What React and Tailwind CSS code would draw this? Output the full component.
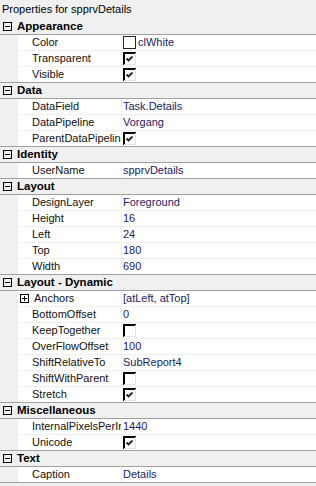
import React from "react";

const font = { fontFamily: '"Liberation Sans", Arial, sans-serif' };

function MinusBox() {
  return (
    <svg width="9" height="9" viewBox="0 0 9 9" className="shrink-0">
      <rect x="0.5" y="0.5" width="8" height="8" fill="none" stroke="#000" />
      <line x1="2" y1="4.5" x2="7" y2="4.5" stroke="#000" />
    </svg>
  );
}

function PlusBox() {
  return (
    <svg width="9" height="9" viewBox="0 0 9 9" className="shrink-0">
      <rect x="0.5" y="0.5" width="8" height="8" fill="none" stroke="#000" />
      <line x1="2" y1="4.5" x2="7" y2="4.5" stroke="#000" />
      <line x1="4.5" y1="2" x2="4.5" y2="7" stroke="#000" />
    </svg>
  );
}

function Check({ checked }) {
  return (
    <svg width="13" height="13" viewBox="0 0 13 13" className="shrink-0">
      <rect x="0" y="0" width="13" height="13" fill="#fff" />
      <rect x="0" y="0" width="13" height="2" fill="#000" />
      <rect x="0" y="0" width="2" height="13" fill="#000" />
      <rect x="12" y="1" width="1" height="12" fill="#e3e3e3" />
      <rect x="1" y="12" width="12" height="1" fill="#e3e3e3" />
      {checked && (
        <path d="M3.5 6.5 L5.5 8.5 L9.5 4.5" fill="none" stroke="#222" strokeWidth="1.8" />
      )}
    </svg>
  );
}

function ColorSwatch() {
  return (
    <svg width="13" height="13" viewBox="0 0 13 13" className="shrink-0">
      <rect x="0.5" y="0.5" width="12" height="12" fill="#fff" stroke="#222" />
    </svg>
  );
}

const groups = [
  {
    name: "Appearance",
    rows: [
      { n: "Color", v: "clWhite", swatch: true },
      { n: "Transparent", check: true },
      { n: "Visible", check: true },
    ],
  },
  {
    name: "Data",
    rows: [
      { n: "DataField", v: "Task.Details" },
      { n: "DataPipeline", v: "Vorgang" },
      { n: "ParentDataPipeline", check: true },
    ],
  },
  { name: "Identity", rows: [{ n: "UserName", v: "spprvDetails" }] },
  {
    name: "Layout",
    rows: [
      { n: "DesignLayer", v: "Foreground" },
      { n: "Height", v: "16" },
      { n: "Left", v: "24" },
      { n: "Top", v: "180" },
      { n: "Width", v: "690" },
    ],
  },
  {
    name: "Layout - Dynamic",
    rows: [
      { n: "Anchors", v: "[atLeft, atTop]", plus: true },
      { n: "BottomOffset", v: "0" },
      { n: "KeepTogether", check: false },
      { n: "OverFlowOffset", v: "100" },
      { n: "ShiftRelativeTo", v: "SubReport4" },
      { n: "ShiftWithParent", check: false },
      { n: "Stretch", check: true },
    ],
  },
  {
    name: "Miscellaneous",
    rows: [
      { n: "InternalPixelsPerInch", v: "1440" },
      { n: "Unicode", check: true },
    ],
  },
  { name: "Text", rows: [{ n: "Caption", v: "Details" }] },
];

function Row({ r, last }) {
  return (
    <div
      className={
        "flex h-[16px] border-b " +
        (last ? "border-[#a0a0a0]" : "border-[#f0f0f0]")
      }
    >
      <div className="w-[18px] shrink-0 bg-[#f0f0f0]" />
      <div className="w-[104px] shrink-0 bg-white border-r border-[#f0f0f0] overflow-hidden whitespace-nowrap flex items-center text-[#111] leading-[15px]">
        {r.plus ? (
          <>
            <div className="ml-[2px] mr-[5px] flex items-center">
              <PlusBox />
            </div>
            <span>{r.n}</span>
          </>
        ) : (
          <span className="pl-[14px]">{r.n}</span>
        )}
      </div>
      <div className="flex-1 bg-white flex items-center overflow-hidden whitespace-nowrap leading-[15px] text-[#1c1c66]">
        {r.swatch ? (
          <>
            <div className="ml-[1px] mr-[2px] flex items-center">
              <ColorSwatch />
            </div>
            <span>{r.v}</span>
          </>
        ) : r.check !== undefined ? (
          <div className="ml-[1px] flex items-center">
            <Check checked={r.check} />
          </div>
        ) : (
          <span className="pl-[1px]">{r.v}</span>
        )}
      </div>
    </div>
  );
}

export default function App() {
  return (
    <div
      className="w-[316px] h-[486px] bg-[#f0f0f0] text-[11px] overflow-hidden"
      style={font}
    >
      <div className="h-[19px] flex items-center pl-[2px] text-black">
        Properties for spprvDetails
      </div>
      {groups.map((g) => (
        <div key={g.name}>
          <div className="flex items-center h-[16px] border-b border-[#a0a0a0] bg-[#f0f0f0]">
            <div className="ml-[3px] mr-[5px] flex items-center">
              <MinusBox />
            </div>
            <span className="font-bold text-black leading-[15px] text-[11.5px]">{g.name}</span>
          </div>
          {g.rows.map((r, i) => (
            <Row key={r.n} r={r} last={i === g.rows.length - 1} />
          ))}
        </div>
      ))}
    </div>
  );
}
